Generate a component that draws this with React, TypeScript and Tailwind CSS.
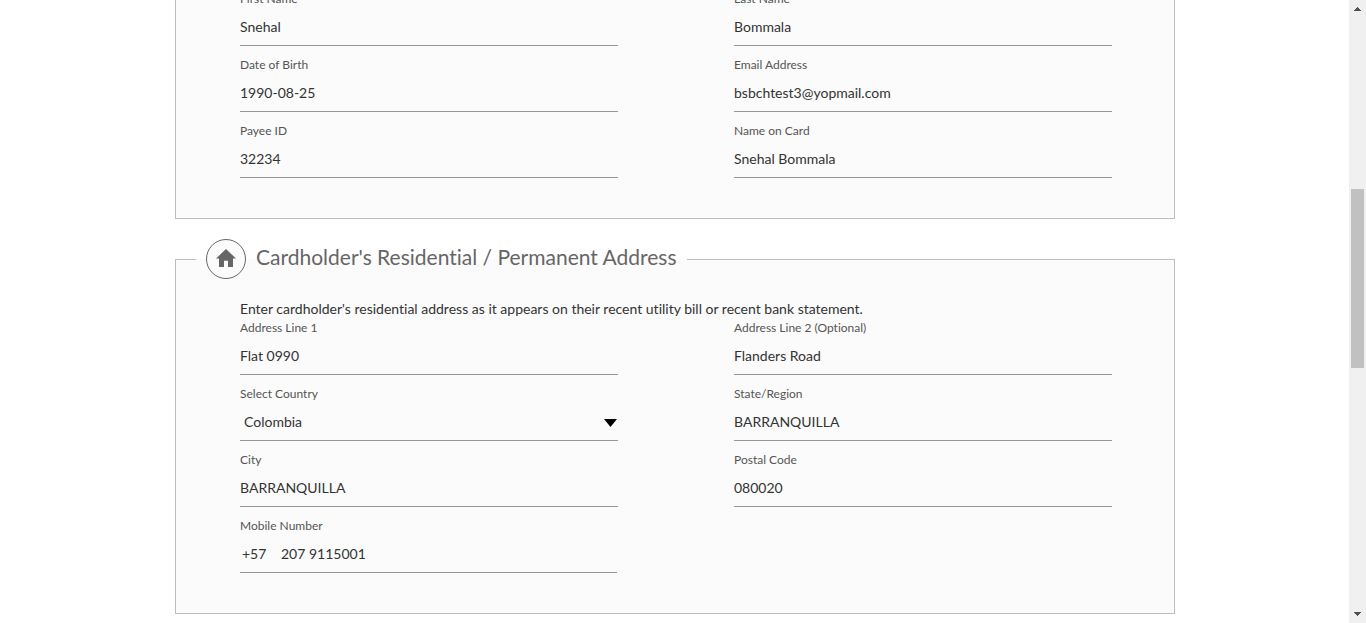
import { useId } from "react";

const control =
  "h-[37px] w-full min-w-0 appearance-none rounded-none border-0 border-b border-[#979797] bg-transparent p-0 pb-0.5 text-[14px] text-[#333] outline-none";
const labelStyle = "block text-[12px] leading-4 text-[#555]";

function Field({ label, value, type = "text" }: { label: string; value: string; type?: string }) {
  const id = useId();
  return (
    <div className="flex flex-col gap-0.5">
      <label htmlFor={id} className={labelStyle}>
        {label}
      </label>
      <input id={id} type={type} defaultValue={value} className={control} />
    </div>
  );
}

function CountryField() {
  const id = useId();
  return (
    <div className="flex flex-col gap-0.5">
      <label htmlFor={id} className={labelStyle}>
        Select Country
      </label>
      <div className="relative">
        <select id={id} defaultValue="Colombia" className={`${control} pl-1`}>
          <option>Colombia</option>
        </select>
        <svg
          viewBox="0 0 13 8"
          className="pointer-events-none absolute top-1/2 right-px h-2 w-[13px] -translate-y-1/2"
          aria-hidden="true"
        >
          <path d="M0 0h13L6.5 8z" fill="#000" />
        </svg>
      </div>
    </div>
  );
}

function MobileField() {
  const id = useId();
  return (
    <div className="flex flex-col gap-0.5">
      <label htmlFor={id} className={labelStyle}>
        Mobile Number
      </label>
      <div className="mr-px flex h-[37px] items-center border-b border-[#979797] pb-0.5 text-[14px] text-[#333]">
        <span className="w-[41px] pl-0.5">+57</span>
        <input
          id={id}
          type="tel"
          defaultValue="207 9115001"
          className="h-full min-w-0 flex-1 bg-transparent p-0 outline-none"
        />
      </div>
    </div>
  );
}

function Scrollbar() {
  return (
    <div className="flex w-[17px] shrink-0 flex-col bg-[#f0f0f0]" aria-hidden="true">
      <svg viewBox="0 0 17 17" className="size-[17px]" shapeRendering="crispEdges">
        <path d="M8 7h1v1h1v1h1v1h1v1H5v-1h1V9h1V8h1z" fill="#505050" />
      </svg>
      <div className="flex-[172]" />
      <div className="mx-0.5 flex-[179] bg-[#c1c1c1]" />
      <div className="flex-[238]" />
      <svg viewBox="0 0 17 17" className="size-[17px]" shapeRendering="crispEdges">
        <path d="M5 6h7v1h-1v1h-1v1H9v1H8V9H7V8H6V7H5z" fill="#505050" />
      </svg>
    </div>
  );
}

export default function App() {
  return (
    <div className="flex h-screen overflow-hidden bg-white font-['Lato',sans-serif] [font-variant-ligatures:none]">
      <main className="min-w-0 flex-1 pl-px">
        <form className="mx-auto max-w-[1000px]">
          <section
            aria-label="Cardholder details"
            className="-mt-[9px] grid grid-cols-2 gap-x-[116px] gap-y-[11px] border border-t-0 border-[#bdbdbd] bg-[#fbfbfb] pr-[62px] pb-10 pl-16"
          >
            <Field label="First Name" value="Snehal" />
            <Field label="Last Name" value="Bommala" />
            <Field label="Date of Birth" value="1990-08-25" />
            <Field label="Email Address" value="bsbchtest3@yopmail.com" type="email" />
            <Field label="Payee ID" value="32234" />
            <Field label="Name on Card" value="Snehal Bommala" />
          </section>

          <fieldset className="mt-5 border border-[#bdbdbd] bg-[#fbfbfb] px-5 pb-10">
            <legend className="flex h-10 items-center gap-2.5 px-2.5">
              <span className="flex size-10 items-center justify-center rounded-full border border-[#666] bg-[#fbfbfb] pb-0.5">
                <svg viewBox="2 3 20 17" preserveAspectRatio="none" className="h-[18px] w-5" aria-hidden="true">
                  <path d="M10 20v-6h4v6h5v-8h3L12 3 2 12h3v8z" fill="#666" />
                </svg>
              </span>
              <span className="pb-1 text-[21px] leading-7 text-[#666]">
                Cardholder's Residential / Permanent Address
              </span>
            </legend>
            <div className="pt-5 pr-[42px] pl-11">
              <p className="mb-px text-[14px] leading-5 text-[#333]">
                Enter cardholder's residential address as it appears on their recent utility bill or recent bank
                statement.
              </p>
              <div className="grid grid-cols-2 gap-x-[116px] gap-y-[11px]">
                <Field label="Address Line 1" value="Flat 0990" />
                <Field label="Address Line 2 (Optional)" value="Flanders Road" />
                <CountryField />
                <Field label="State/Region" value="BARRANQUILLA" />
                <Field label="City" value="BARRANQUILLA" />
                <Field label="Postal Code" value="080020" />
                <MobileField />
              </div>
            </div>
          </fieldset>
        </form>
      </main>
      <Scrollbar />
    </div>
  );
}
